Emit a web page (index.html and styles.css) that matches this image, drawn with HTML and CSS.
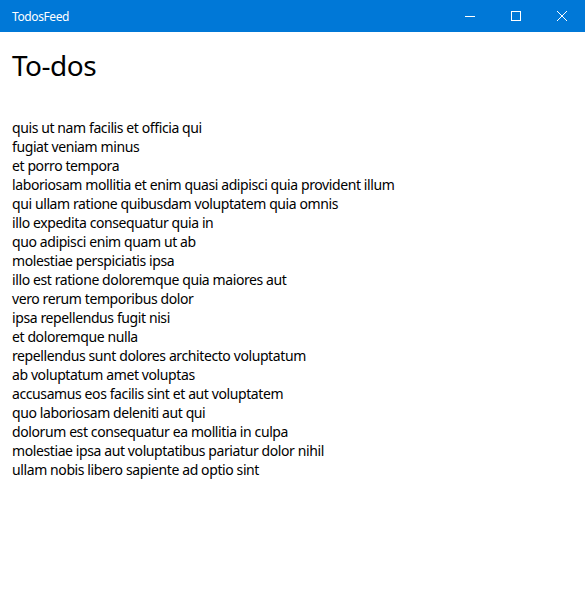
FILE: index.html
```html
<!DOCTYPE html>
<html>
<head>
<meta charset="utf-8">
<link rel="stylesheet" href="styles.css">
</head>
<body>
<div class="window">
  <header class="titlebar">
    <span class="title">TodosFeed</span>
    <div class="controls">
      <button class="ctl" aria-label="Minimize">
        <svg width="10" height="10" viewBox="0 0 10 10"><path d="M0 5.5H10" stroke="#fff" stroke-width="1"/></svg>
      </button>
      <button class="ctl" aria-label="Maximize">
        <svg width="10" height="10" viewBox="0 0 10 10"><rect x="0.5" y="0.5" width="9" height="9" fill="none" stroke="#fff" stroke-width="1"/></svg>
      </button>
      <button class="ctl" aria-label="Close">
        <svg width="10" height="10" viewBox="0 0 10 10"><path d="M0 0L10 10M10 0L0 10" stroke="#fff" stroke-width="1"/></svg>
      </button>
    </div>
  </header>
  <main class="content">
    <h1 class="heading">To-dos</h1>
    <ul class="todos">
      <li>quis ut nam facilis et officia qui</li>
      <li>fugiat veniam minus</li>
      <li>et porro tempora</li>
      <li>laboriosam mollitia et enim quasi adipisci quia provident illum</li>
      <li>qui ullam ratione quibusdam voluptatem quia omnis</li>
      <li>illo expedita consequatur quia in</li>
      <li>quo adipisci enim quam ut ab</li>
      <li>molestiae perspiciatis ipsa</li>
      <li>illo est ratione doloremque quia maiores aut</li>
      <li>vero rerum temporibus dolor</li>
      <li>ipsa repellendus fugit nisi</li>
      <li>et doloremque nulla</li>
      <li>repellendus sunt dolores architecto voluptatum</li>
      <li>ab voluptatum amet voluptas</li>
      <li>accusamus eos facilis sint et aut voluptatem</li>
      <li>quo laboriosam deleniti aut qui</li>
      <li>dolorum est consequatur ea mollitia in culpa</li>
      <li>molestiae ipsa aut voluptatibus pariatur dolor nihil</li>
      <li>ullam nobis libero sapiente ad optio sint</li>
    </ul>
  </main>
</div>
</body>
</html>
```

FILE: styles.css
```css
html, body {
  margin: 0;
  padding: 0;
  background: #fff;
}
body {
  font-family: "Noto Sans", "Open Sans", sans-serif;
  color: #000;
}
.window {
  width: 585px;
  height: 601px;
  display: flex;
  flex-direction: column;
}
.titlebar {
  height: 32px;
  background: #0078d7;
  display: flex;
  align-items: center;
  justify-content: space-between;
  flex-shrink: 0;
}
.title {
  color: #fff;
  font-size: 12px;
  letter-spacing: -0.4px;
  padding-left: 12px;
}
.controls {
  display: flex;
  height: 100%;
}
.ctl {
  width: 46px;
  height: 32px;
  border: 0;
  padding: 0;
  margin: 0;
  background: transparent;
  display: flex;
  align-items: center;
  justify-content: center;
}
.ctl svg {
  display: block;
}
.content {
  padding: 0 12px;
}
.heading {
  margin: 15px 0 0 0;
  font-size: 28px;
  font-weight: 400;
  letter-spacing: -0.5px;
  line-height: 37px;
}
.todos {
  list-style: none;
  margin: 34px 0 0 0;
  padding: 0;
  font-size: 14px;
  letter-spacing: -0.4px;
  line-height: 19px;
}
```
